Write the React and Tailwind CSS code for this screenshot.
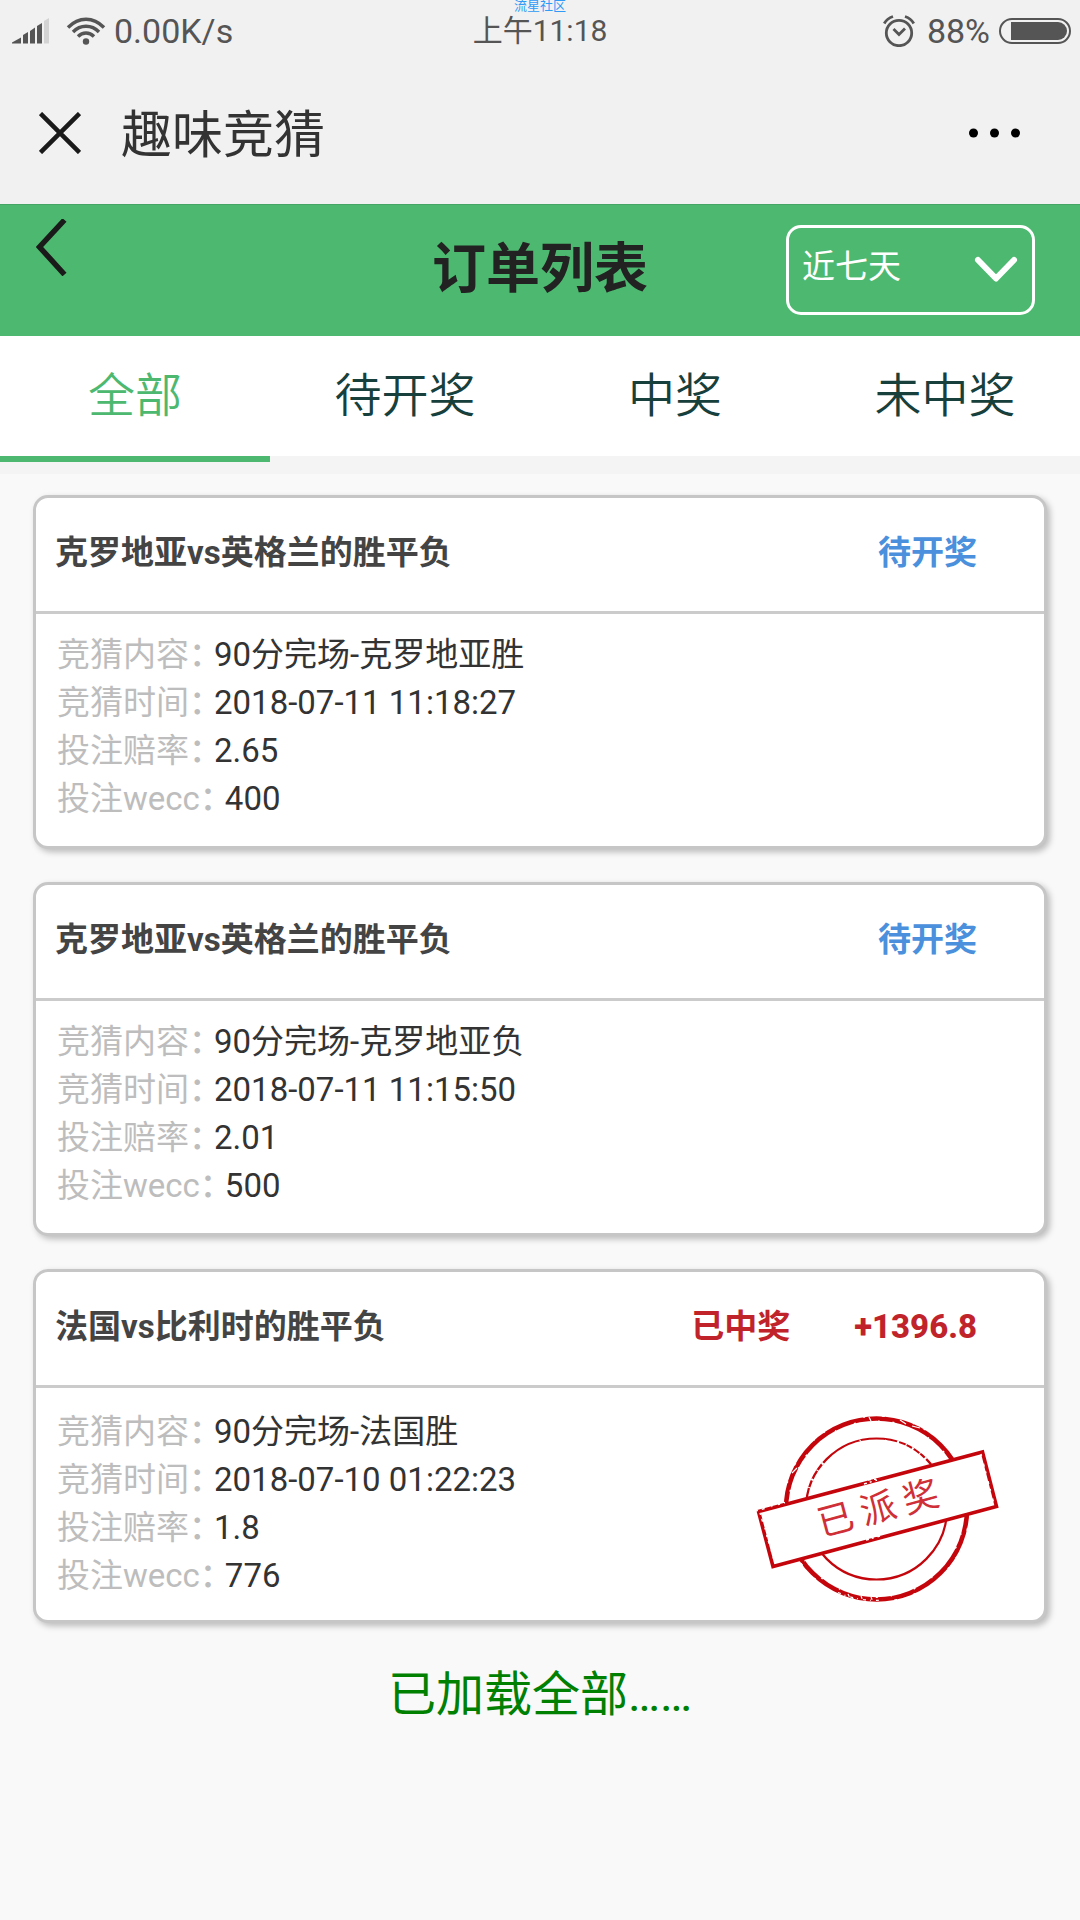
import { useState } from "react";

const orders = [
  {
    title: "克罗地亚vs英格兰的胜平负",
    status: "待开奖",
    rows: [
      ["竞猜内容", "90分完场-克罗地亚胜"],
      ["竞猜时间", "2018-07-11 11:18:27"],
      ["投注赔率", "2.65"],
      ["投注wecc", "400"],
    ],
  },
  {
    title: "克罗地亚vs英格兰的胜平负",
    status: "待开奖",
    rows: [
      ["竞猜内容", "90分完场-克罗地亚负"],
      ["竞猜时间", "2018-07-11 11:15:50"],
      ["投注赔率", "2.01"],
      ["投注wecc", "500"],
    ],
  },
  {
    title: "法国vs比利时的胜平负",
    status: "已中奖",
    prize: "+1396.8",
    paid: true,
    rows: [
      ["竞猜内容", "90分完场-法国胜"],
      ["竞猜时间", "2018-07-10 01:22:23"],
      ["投注赔率", "1.8"],
      ["投注wecc", "776"],
    ],
  },
];

const tabs = ["全部", "待开奖", "中奖", "未中奖"];

function SignalIcon() {
  return (
    <svg width="38" height="26" viewBox="0 0 38 26" fill="#555" aria-hidden="true">
      <path d="M0 25.5V24.500L9 19.500V25.500Z" />
      <path d="M11 25.500V17L16 14V25.500Z" />
      <path d="M18 25.500V13L23 9.500V25.500Z" />
      <path d="M25 25.500V8L30 5V25.500Z" />
      <path d="M32 25.500V3L37 0V25.500Z" fill="#d3d3d3" />
    </svg>
  );
}

function WifiIcon() {
  return (
    <svg width="40" height="28" viewBox="0 0 40 28" fill="none" stroke="#555" strokeWidth="3.400" aria-hidden="true">
      <path d="M2 10.500Q10 2.200 20 2.200T38 10.500" />
      <path d="M7 15Q12.500 9.200 20 9.200T33 15" />
      <path d="M12 19.500Q15.500 16 20 16T28 19.500" />
      <circle cx="20" cy="24.500" r="3.200" fill="#555" stroke="none" />
    </svg>
  );
}

function AlarmIcon() {
  return (
    <svg width="32" height="32" viewBox="0 0 32 32" fill="none" stroke="#555" strokeWidth="2.800" aria-hidden="true">
      <circle cx="16" cy="18" r="12.700" />
      <path d="M10.500 14L16 19.500L22 13.500" />
      <path d="M1.200 8.500Q4 3.500 10 1.500M30.800 8.500Q28 3.500 22 1.500" />
    </svg>
  );
}

function BatteryIcon() {
  return (
    <svg width="72" height="26" viewBox="0 0 72 26" aria-hidden="true">
      <rect x="1" y="1" width="70" height="24" rx="12" fill="none" stroke="#555" strokeWidth="2" />
      <path d="M12 4H59A9 9 0 0 1 59 22H12Z" fill="#555" />
    </svg>
  );
}

function Stamp() {
  return (
    <svg className="shrink-0" width="248" height="190" viewBox="14 24 248 190" fill="none" role="img" aria-label="已派奖">
      <g stroke="#c4060c">
        <circle cx="136.500" cy="119" r="90.500" strokeWidth="4.600" />
        <circle cx="136.500" cy="119" r="70.500" strokeWidth="2.200" />
      </g>
      <g stroke="#fff">
        <circle cx="136.500" cy="119" r="93" strokeWidth="1.400" strokeDasharray="2 17 3 29 1 11 2 41" />
        <circle cx="136.500" cy="119" r="88.200" strokeWidth="1.400" strokeDasharray="2 23 1 13 2 37 1 19" />
        <path d="M98 202.500A92 92 0 0 0 143 210M108 204L110 208M121 206L123 211M131 207L133 212" strokeWidth="1.200" strokeDasharray="3 4 1 5" />
        <path d="M129 27L131 31M160 30L166 34M172 36L180 38M52 83L57 78" strokeWidth="1.200" />
        <path d="M157 52A72 72 0 0 1 192 76" strokeWidth="3.500" strokeDasharray="2 7 1 6" />
        <path d="M69 98A72 72 0 0 1 88 68M120 51L124 47M146 51L148 47" strokeWidth="2.500" strokeDasharray="1 7 2 9" />
      </g>
      <path d="M18.500 121.500L242.500 62L256.500 116.500L33 176.500Z" fill="#fff" stroke="#c4060c" strokeWidth="3.600" />
      <g stroke="#fff" strokeWidth="1.400">
        <path d="M16 121L45 112.500M20 123L34 170" strokeDasharray="2 4 3 7 1 6" />
        <path d="M124 94L137 90M128 90L140 88.500M126 150L140 146M130 147L142 145" strokeWidth="1.500" strokeDasharray="3 3 2 4" />
        <path d="M198 129L228 121M241 64L254 114" strokeDasharray="2 8 3 5" />
      </g>
      <g transform="rotate(-15 138 118)" fill="#cf2f36" fontSize="36" textAnchor="middle" fontFamily="'Noto Sans CJK SC', sans-serif">
        <text x="94" y="131">已</text>
        <text x="138" y="131">派</text>
        <text x="182" y="131">奖</text>
      </g>
    </svg>
  );
}

function OrderCard({ order }) {
  return (
    <article className="rounded-[15px] border-[3px] border-[#c6c6c6] bg-white shadow-[3px_3px_6px_rgba(0,0,0,0.25)]">
      <header className="flex h-[116px] items-center border-b-[3px] border-[#cbcbcb] pr-[67px] pb-[3px] pl-[19px] text-[33px] leading-[48px] font-bold">
        <h2 className="flex-1 text-[#444]">{order.title}</h2>
        {order.prize ? (
          <div className="flex gap-16 text-[#c1232b]">
            <span>{order.status}</span>
            <span className="font-extrabold">{order.prize}</span>
          </div>
        ) : (
          <span className="text-[#4a90dc]">{order.status}</span>
        )}
      </header>
      <div className="flex items-start justify-between pr-[42px] pl-[21px]">
        <dl
          className={
            order.paid ? "py-5 text-[33px] leading-[48px]" : "pt-[17px] pb-[23px] text-[33px] leading-[48px]"
          }
        >
          {order.rows.map(([label, value]) => (
            <div key={label} className="flex">
              <dt className="flex items-baseline text-[#bdbdbd]">
                {label}
                <span className="w-[25px] font-medium [font-feature-settings:'halt']">：</span>
              </dt>
              <dd className="text-[#333]">{value}</dd>
            </div>
          ))}
        </dl>
        {order.paid && (
          <div className="pt-[26px]">
            <Stamp />
          </div>
        )}
      </div>
    </article>
  );
}

export default function App() {
  const [active, setActive] = useState(0);
  return (
    <div className="min-h-screen bg-[#f9f9f9] font-[Roboto,'Noto_Sans_CJK_SC',sans-serif]">
      <div className="bg-[#f1f1f1]">
        <div className="relative grid h-[62px] grid-cols-[1fr_auto_1fr] items-center px-[9px] text-[#555]">
          <div className="flex items-center pl-[3px]">
            <SignalIcon />
            <span className="ml-4">
              <WifiIcon />
            </span>
            <span className="ml-2 text-[34px] leading-10">0.00K/s</span>
          </div>
          <span className="text-[30px] leading-10">上午11:18</span>
          <div className="flex items-center justify-end">
            <AlarmIcon />
            <span className="mr-[9px] ml-3 text-[34px] leading-10">88%</span>
            <BatteryIcon />
          </div>
          <span className="absolute inset-x-0 top-0 text-center text-[13px] leading-3 text-[#2f9bf7]">流星社区</span>
        </div>
        <div className="flex h-[142px] items-center pr-[60px] pl-[39px]">
          <button type="button" aria-label="关闭">
            <svg width="42" height="42" viewBox="0 0 42 42" stroke="#1a1a1a" strokeWidth="4.500">
              <path d="M1.500 1.500L40.500 40.500M40.500 1.500L1.500 40.500" />
            </svg>
          </button>
          <h1 className="ml-10 flex-1 pt-1.5 text-[51px] leading-[72px] text-[#333]">趣味竞猜</h1>
          <button type="button" aria-label="更多">
            <svg width="51" height="10" viewBox="0 0 51 10" fill="#000">
              <circle cx="4.500" cy="5" r="4.500" />
              <circle cx="25.500" cy="5" r="4.500" />
              <circle cx="46.500" cy="5" r="4.500" />
            </svg>
          </button>
        </div>
      </div>

      <div className="grid h-[132px] grid-cols-[1fr_auto_1fr] items-center bg-[#4db970] px-[45px] shadow-[inset_0_1px_0_#45a565]">
        <button type="button" aria-label="返回" className="mt-[15px] -ml-[9px] self-start justify-self-start">
          <svg width="31" height="57" viewBox="0 0 31 57" fill="none" stroke="#1a1a1a" strokeWidth="5.500">
            <path d="M28.500 1L3.500 28L28.500 55.500" />
          </svg>
        </button>
        <h2 className="text-[54px] leading-[72px] font-bold text-[#222]">订单列表</h2>
        <div className="relative w-[249px] justify-self-end">
          <select
            aria-label="时间范围"
            className="block h-[90px] w-full appearance-none rounded-[15px] border-[3px] border-white bg-transparent pb-1.5 pl-[13px] text-[33px] text-white"
          >
            <option>近七天</option>
          </select>
          <svg
            className="pointer-events-none absolute top-[31px] right-[17px]"
            width="44"
            height="28"
            viewBox="0 0 44 28"
            fill="none"
            stroke="#fff"
            strokeWidth="6"
            strokeLinecap="round"
            strokeLinejoin="round"
            aria-hidden="true"
          >
            <path d="M4 4L22 22.500L40 4" />
          </svg>
        </div>
      </div>

      <nav className="grid grid-cols-4 border-b-[12px] border-[#f4f4f4] bg-white">
        {tabs.map((tab, i) => (
          <button
            key={tab}
            type="button"
            onClick={() => setActive(i)}
            className={
              i === active
                ? "h-[126px] border-b-[6px] border-[#4db970] text-[47px] font-[350] text-[#4db970]"
                : "h-[126px] border-b-[6px] border-[#f4f4f4] text-[47px] font-[350] text-[#17403c]"
            }
          >
            {tab}
          </button>
        ))}
      </nav>

      <main className="flex flex-col gap-[33px] px-[33px] pt-[21px]">
        {orders.map((order, i) => (
          <OrderCard key={i} order={order} />
        ))}
        <p className="pt-[3px] text-center text-[48px] leading-[72px] text-[#008000]">已加载全部……</p>
      </main>
    </div>
  );
}
